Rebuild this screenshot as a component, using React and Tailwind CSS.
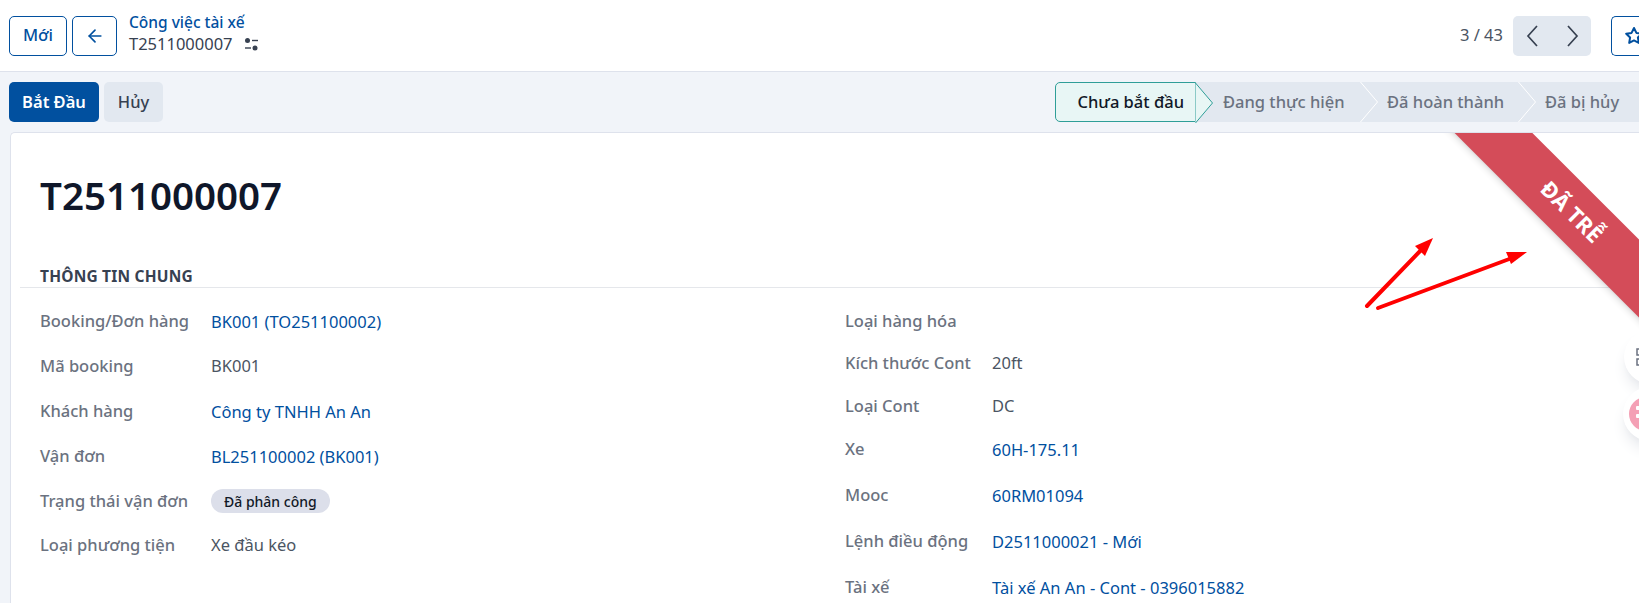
import React from 'react';
import { ArrowLeft } from 'lucide-react';

const leftRows = [
  { label: 'Booking/Đơn hàng', value: 'BK001 (TO251100002)', link: true, h: 'h-[44px]' },
  { label: 'Mã booking', value: 'BK001', h: 'h-[46px]' },
  { label: 'Khách hàng', value: 'Công ty TNHH An An', link: true, h: 'h-[44px]' },
  { label: 'Vận đơn', value: 'BL251100002 (BK001)', link: true, h: 'h-[46px]' },
  { label: 'Trạng thái vận đơn', badge: 'Đã phân công', h: 'h-[44px]' },
  { label: 'Loại phương tiện', value: 'Xe đầu kéo', h: 'h-[44px]' },
];

const rightRows = [
  { label: 'Loại hàng hóa', value: '', h: 'h-[42px]' },
  { label: 'Kích thước Cont', value: '20ft', h: 'h-[43px]' },
  { label: 'Loại Cont', value: 'DC', h: 'h-[43px]' },
  { label: 'Xe', value: '60H-175.11', link: true, h: 'h-[43px]' },
  { label: 'Mooc', value: '60RM01094', link: true, h: 'h-[48px]' },
  { label: 'Lệnh điều động', value: 'D2511000021 - Mới', link: true, h: 'h-[44px]' },
  { label: 'Tài xế', value: 'Tài xế An An - Cont - 0396015882', link: true, h: 'h-[48px]' },
];

const Row = ({ row, labelW }) => (
  <div className={`flex items-center ${row.h}`}>
    <div className={`${labelW} shrink-0 text-[#6b7280] font-medium`}>{row.label}</div>
    {row.badge ? (
      <span className="rounded-full bg-[#dcdfea] px-[13px] h-[24px] flex items-center text-[14px] font-medium text-[#111827]">{row.badge}</span>
    ) : (
      <div className={row.link ? 'text-[#01509f] mt-[2px]' : 'text-[#4b5563]'}>{row.value}</div>
    )}
  </div>
);

const Step = ({ children, w, active }) => (
  <div className={`relative flex items-center h-[40px] font-medium ${w} ${active ? 'bg-[#e8f6f5] border border-[#2f9e98] rounded-l-[5px] text-[#111827] justify-end pr-[11px]' : 'bg-[#e2e8f0] text-[#6b7280] pl-[27px]'}`}>
    {children}
    <svg className="absolute left-full top-0 z-10" width="18" height="40" viewBox="0 0 18 40" fill={active ? '#e8f6f5' : 'none'} stroke={active ? '#2f9e98' : '#ffffff'} strokeWidth="1">
      <path d="M0.5 0L17.5 20L0.5 40" />
    </svg>
  </div>
);

const Chevron = ({ d }) => (
  <svg width="20" height="24" viewBox="0 0 20 24" fill="none" stroke="#374151" strokeWidth="1.7">
    <path d={d} />
  </svg>
);

export default function App() {
  return (
    <div className="h-[603px] overflow-hidden relative bg-[#f1f4f9] text-[16.5px] font-['Noto_Sans','Open_Sans',sans-serif]">
      <div className="bg-white h-[72px] border-b border-[#dee2ec] flex items-center pl-[9px]">
        <button className="w-[58px] h-[40px] rounded-[5px] border border-[#01509f] text-[#01509f] font-medium">Mới</button>
        <button className="ml-[5px] w-[45px] h-[40px] rounded-[5px] border border-[#01509f] text-[#01509f] flex items-center justify-center">
          <ArrowLeft size={20} />
        </button>
        <div className="ml-[12px] leading-[22px] mb-[5px]">
          <div className="text-[#01509f] text-[15.5px] font-medium">Công việc tài xế</div>
          <div className="flex items-center text-[#374151]">
            T2511000007
            <svg className="ml-[11px]" width="15" height="15" viewBox="0 0 15 15" fill="#374151">
              <circle cx="3.5" cy="3.5" r="2.5" />
              <rect x="8" y="2.8" width="6" height="1.4" />
              <circle cx="11" cy="11" r="2.5" />
              <rect x="1" y="10.3" width="6" height="1.4" />
            </svg>
          </div>
        </div>
        <div className="ml-auto flex items-center">
          <span className="text-[#4b5563]">3 / 43</span>
          <div className="ml-[10px] w-[78px] h-[40px] bg-[#e2e8f0] rounded-[5px] flex items-center">
            <div className="w-[39px] flex justify-center"><Chevron d="M14 2L5 12L14 22" /></div>
            <div className="w-[39px] flex justify-center"><Chevron d="M6 2L15 12L6 22" /></div>
          </div>
          <div className="ml-[20px] w-[28px] h-[40px] overflow-hidden border-y border-l border-[#01509f] rounded-l-[5px] flex items-center pl-[12px]">
            <svg className="shrink-0" width="20" height="20" viewBox="0 0 20 20" fill="none" stroke="#01509f" strokeWidth="2" strokeLinejoin="round">
              <path d="M10 2l2.4 4.9 5.4.8-3.9 3.8.9 5.4L10 14.4l-4.8 2.5.9-5.4-3.9-3.8 5.4-.8z" />
            </svg>
          </div>
        </div>
      </div>

      <div className="flex items-center h-[60px] pl-[9px]">
        <button className="w-[90px] h-[40px] rounded-[5px] bg-[#01509f] text-white font-semibold">Bắt Đầu</button>
        <button className="ml-[5px] w-[59px] h-[40px] rounded-[5px] bg-[#e2e8f0] text-[#374151] font-medium">Hủy</button>
        <div className="ml-auto flex">
          <Step active w="w-[141px]">Chưa bắt đầu</Step>
          <Step w="w-[164px]">Đang thực hiện</Step>
          <Step w="w-[158px]">Đã hoàn thành</Step>
          <Step w="w-[121px]">Đã bị hủy</Step>
        </div>
      </div>

      <div className="relative ml-[10px] h-[471px] overflow-hidden bg-white border-t border-l border-[#dee2ec] rounded-tl-[5px] pl-[9px]">
        <h1 className="pl-[20px] pt-[36px] h-[127px] text-[38.5px] leading-[52px] font-semibold text-[#0f172a]">T2511000007</h1>
        <div className="border-b border-[#e5e7eb] h-[28px] pl-[20px] pt-[4px] text-[15.5px] tracking-[0.2px] font-bold text-[#374151] leading-[24px]">THÔNG TIN CHUNG</div>
        <div className="grid grid-cols-[805px_1fr] pl-[20px]">
          <div className="pt-[11px]">
            {leftRows.map(r => <Row key={r.label} row={r} labelW="w-[171px]" />)}
          </div>
          <div className="pt-[12px]">
            {rightRows.map(r => <Row key={r.label} row={r} labelW="w-[147px]" />)}
          </div>
        </div>

        <div className="absolute right-[-133px] top-[51px] w-[400px] h-[55px] rotate-45 bg-[#d44c59] shadow-md flex items-center justify-center text-white font-bold text-[22px]">ĐÃ TRỄ</div>
      </div>

      <svg className="absolute left-0 top-0 pointer-events-none" width="1639" height="603" viewBox="0 0 1639 603">
        <path d="M1367 306L1424 247" stroke="#ff0000" strokeWidth="4" strokeLinecap="round" />
        <path d="M1433 238L1425 256L1415 246Z" fill="#ff0000" />
        <path d="M1378 308L1512 258" stroke="#ff0000" strokeWidth="4" strokeLinecap="round" />
        <path d="M1527 252L1511 264L1506 252Z" fill="#ff0000" />
      </svg>

      <div className="absolute left-[1624px] top-[330px] w-[54px] h-[54px] rounded-full bg-white shadow-lg shadow-gray-200 flex items-center pl-[12px]">
        <svg width="14" height="18" viewBox="0 0 14 18" fill="none" stroke="#6b7280" strokeWidth="1.5">
          <rect x="1" y="1" width="6" height="6" />
          <rect x="1" y="11" width="6" height="6" />
        </svg>
      </div>
      <div className="absolute left-[1623px] top-[387px] w-[54px] h-[54px] rounded-full bg-white shadow-lg shadow-gray-200 flex items-center pl-[6px]">
        <svg width="34" height="34" viewBox="0 0 34 34">
          <circle cx="17" cy="17" r="17" fill="#f4a0b5" />
          <rect x="7" y="9" width="9" height="4" rx="1" fill="#ffffff" />
          <rect x="7" y="17" width="9" height="4" rx="1" fill="#ffffff" />
        </svg>
      </div>
    </div>
  );
}
